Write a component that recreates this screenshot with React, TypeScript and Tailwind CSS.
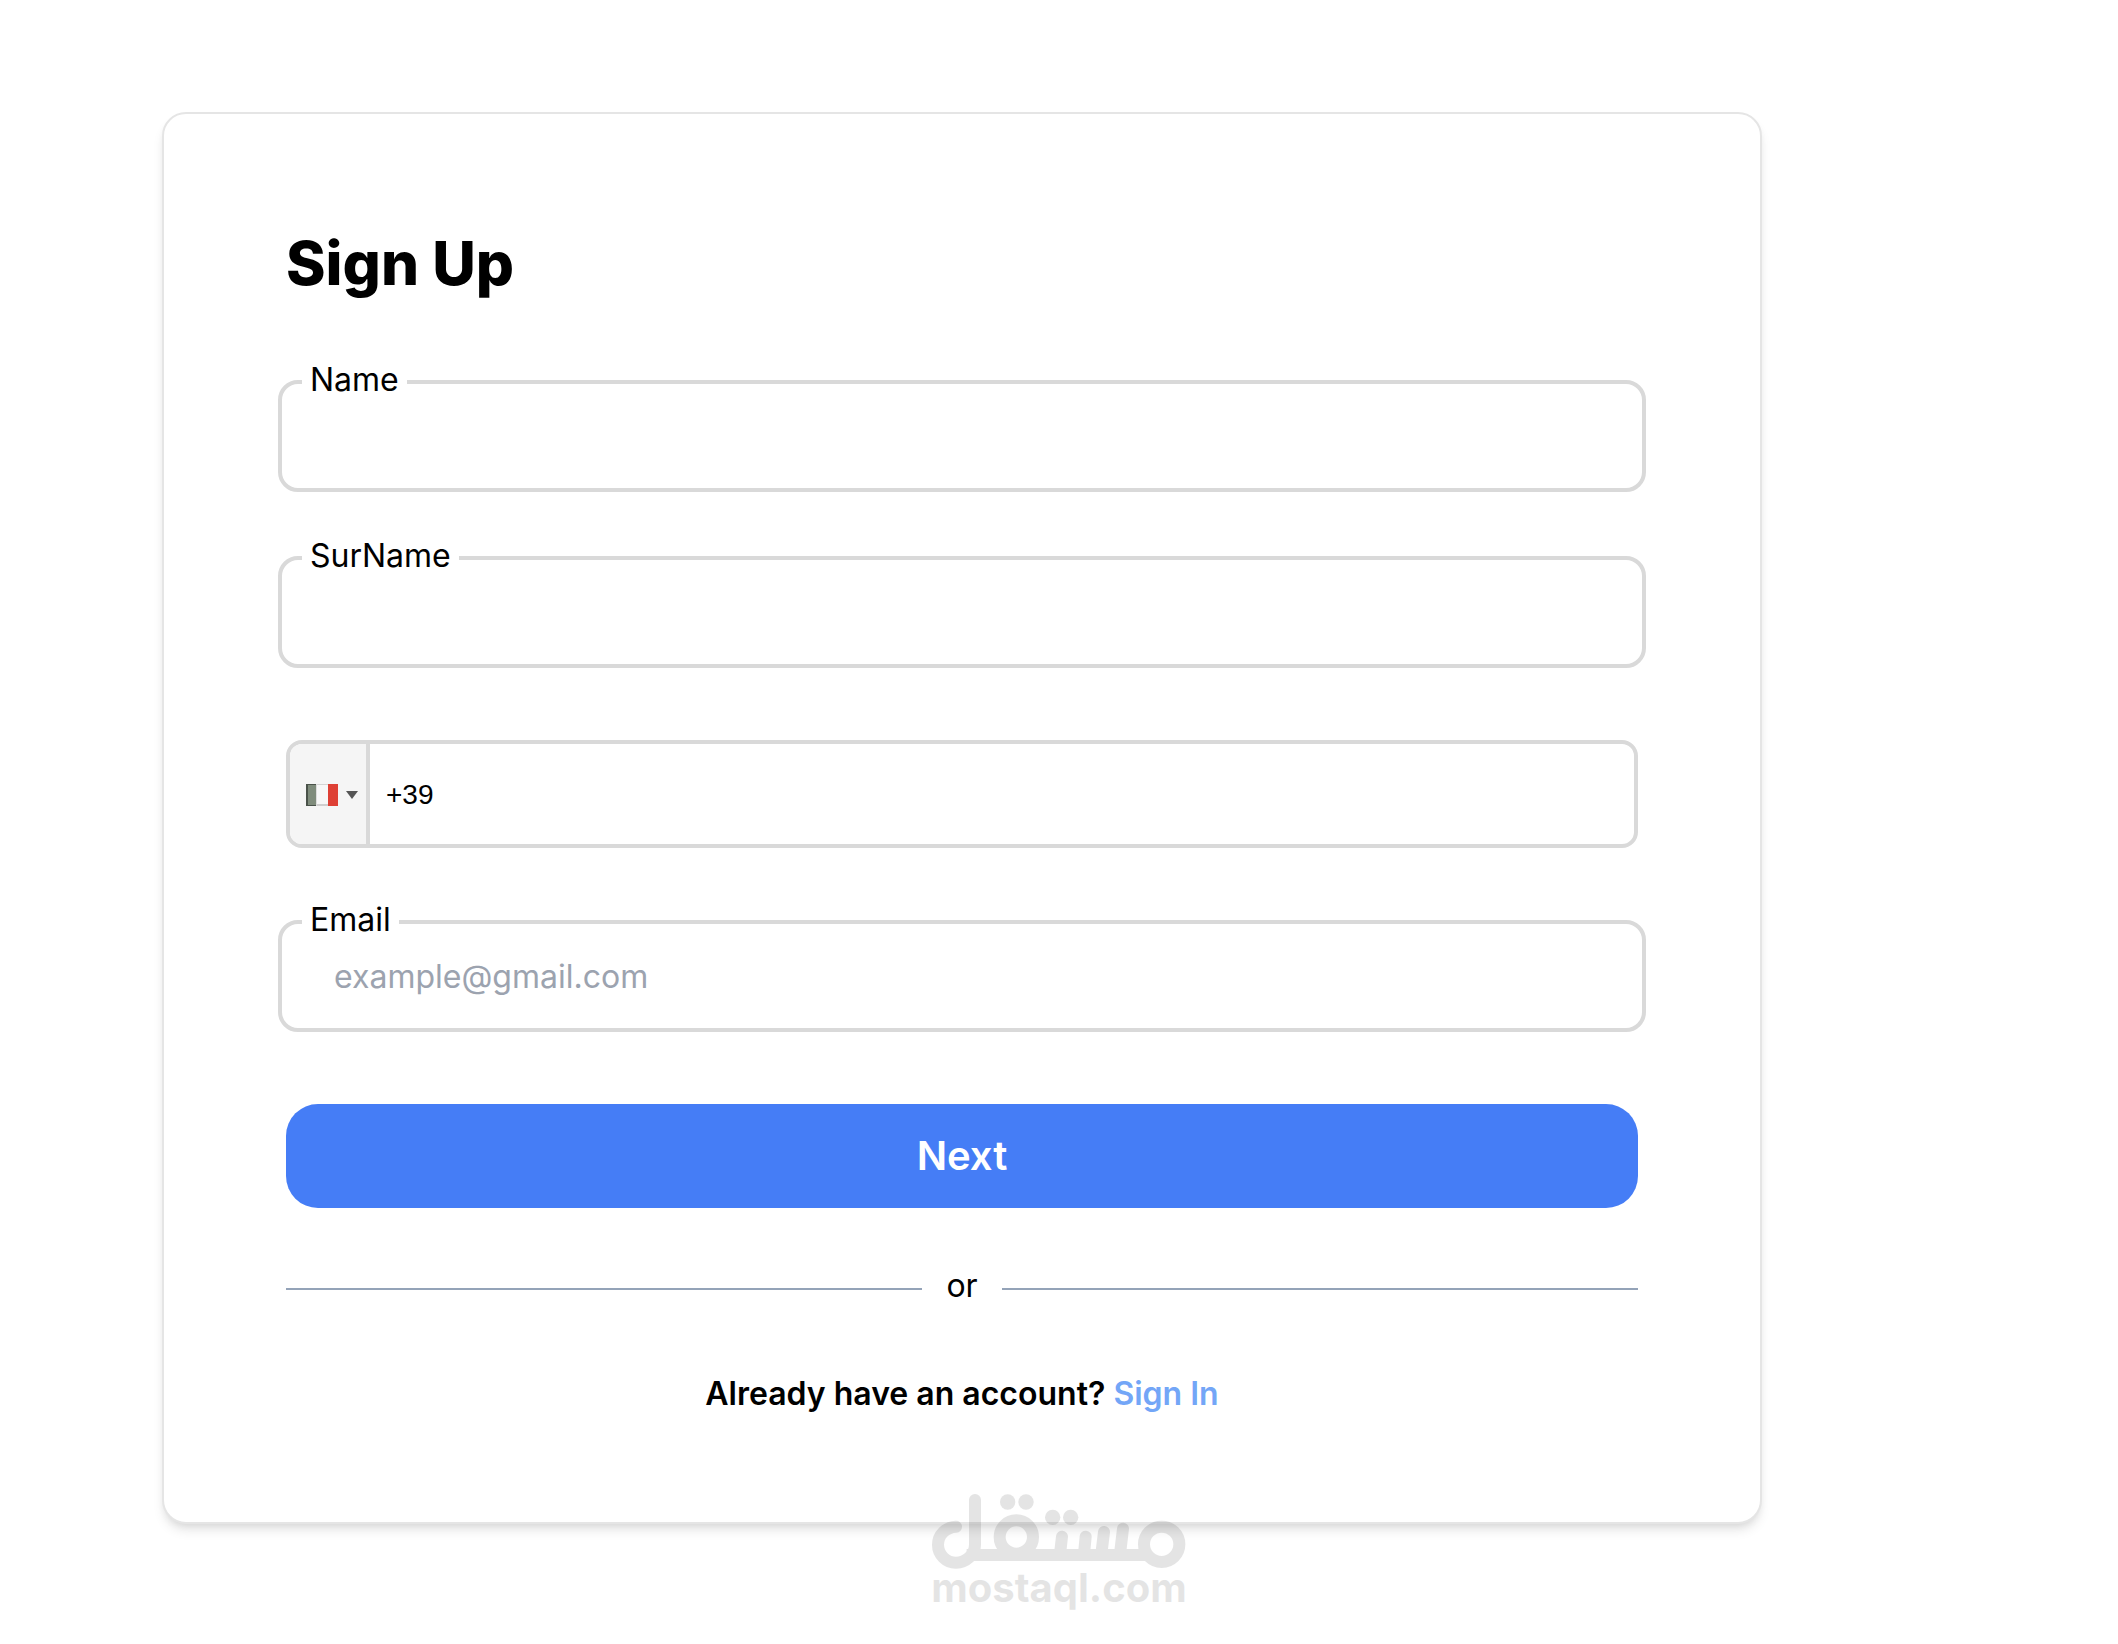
import { useState } from "react";

type TextFieldProps = {
  id: string;
  label: string;
  type?: string;
  placeholder?: string;
};

function TextField({ id, label, type = "text", placeholder }: TextFieldProps) {
  return (
    <div className="relative -mx-2">
      <label
        htmlFor={id}
        className="absolute -top-5 left-6 bg-white px-2 text-[32px] leading-10"
      >
        {label}
      </label>
      <input
        id={id}
        name={id}
        type={type}
        placeholder={placeholder}
        className="block h-28 w-full rounded-[20px] border-4 border-[#d9d9d9] bg-white px-[52px] text-[32px] leading-10 outline-none placeholder:text-[#9ca3af] placeholder:opacity-100"
      />
    </div>
  );
}

function ItalyFlag() {
  return (
    <svg viewBox="0 0 32 22" className="h-[22px] w-8" aria-hidden="true">
      <rect width="32" height="22" fill="#f7f7f7" />
      <rect width="10" height="22" fill="#4a524a" />
      <rect x="2" y="1" width="8" height="20" fill="#7f8c7c" />
      <rect x="10" width="12" height="1" fill="#d4d4d4" />
      <rect x="10" y="20" width="12" height="2" fill="#cfcfcf" />
      <rect x="10" width="1" height="22" fill="#dcdcdc" />
      <rect x="22" width="10" height="22" fill="#de4035" />
    </svg>
  );
}

function PhoneField() {
  const [phone, setPhone] = useState("+39");
  return (
    <div className="flex h-[108px] overflow-hidden rounded-2xl border-4 border-[#d9d9d9] bg-white">
      <button
        type="button"
        aria-label="Country: Italy"
        className="flex w-20 shrink-0 items-center gap-2 border-r-4 border-[#d9d9d9] bg-[#f5f5f5] pt-0.5 pl-4"
      >
        <ItalyFlag />
        <svg viewBox="0 0 12 8" className="h-2 w-3" aria-hidden="true">
          <path d="M0 0h12L6 8z" fill="#555" />
        </svg>
      </button>
      <input
        type="tel"
        aria-label="Phone"
        value={phone}
        onChange={(event) => setPhone(event.target.value)}
        className="min-w-0 flex-1 px-4 pt-0.5 font-['Liberation_Sans',sans-serif] text-[28px] text-black outline-none"
      />
    </div>
  );
}

function MostaqlMark() {
  return (
    <div className="pointer-events-none relative -mt-[30px] flex flex-col items-center opacity-10">
      <svg viewBox="96 72 762 225" className="h-[75px] w-[254px]" aria-hidden="true">
        <g fill="none" stroke="#000" strokeWidth="36" strokeLinecap="round">
          <path d="M168 170C137 172 114 194 114 224a54 54 0 0 0 54 54c30 0 57-24 57-54V90" />
          <path d="M200 255H745" strokeLinecap="butt" />
          <circle cx="349" cy="201" r="50" />
          <path d="M486 200L480 252M557 200L552 252M612 186L604 252M669 176L660 252" />
          <circle cx="785" cy="223" r="53" />
        </g>
        <g fill="#000">
          <circle cx="323" cy="96" r="23" />
          <circle cx="378" cy="96" r="23" />
          <circle cx="458" cy="142" r="23" />
          <circle cx="512" cy="142" r="23" />
        </g>
      </svg>
      <p className="-mt-px text-[40px] leading-10 font-bold text-black">mostaql.com</p>
    </div>
  );
}

export default function App() {
  return (
    <div className="min-h-screen bg-white pt-28 font-['Inter','Liberation_Sans',sans-serif] text-black">
      <main className="px-[162px]">
        <div className="w-full max-w-[1600px] rounded-3xl border-2 border-[#e5e5e5] bg-white px-[122px] pt-[113px] pb-[104px] shadow-[0_8px_12px_-2px_rgba(0,0,0,0.1),0_4px_8px_-4px_rgba(0,0,0,0.1)]">
          <form onSubmit={(event) => event.preventDefault()}>
            <h1 className="mb-[81px] text-[60px] leading-[72px] font-extrabold">
              Sign Up
            </h1>
            <div className="flex flex-col gap-[72px]">
              <div className="flex flex-col gap-16">
                <TextField id="name" label="Name" />
                <TextField id="surname" label="SurName" />
              </div>
              <PhoneField />
              <TextField
                id="email"
                label="Email"
                type="email"
                placeholder="example@gmail.com"
              />
              <button
                type="submit"
                className="h-[104px] w-full rounded-[32px] bg-[#457df6] text-[40px] font-semibold text-white"
              >
                Next
              </button>
            </div>
          </form>
          <div className="mt-[54px] flex items-center gap-6">
            <span className="h-0.5 flex-1 bg-[#94a3b8]" />
            <span className="pb-[6px] text-[32px] leading-[48px]">or</span>
            <span className="h-0.5 flex-1 bg-[#94a3b8]" />
          </div>
          <p className="mt-[54px] text-center text-[32px] leading-[48px] font-semibold">
            Already have an account?{" "}
            <a href="#sign-in" className="text-[#73a6f7]">
              Sign In
            </a>
          </p>
        </div>
      </main>
      <MostaqlMark />
    </div>
  );
}
